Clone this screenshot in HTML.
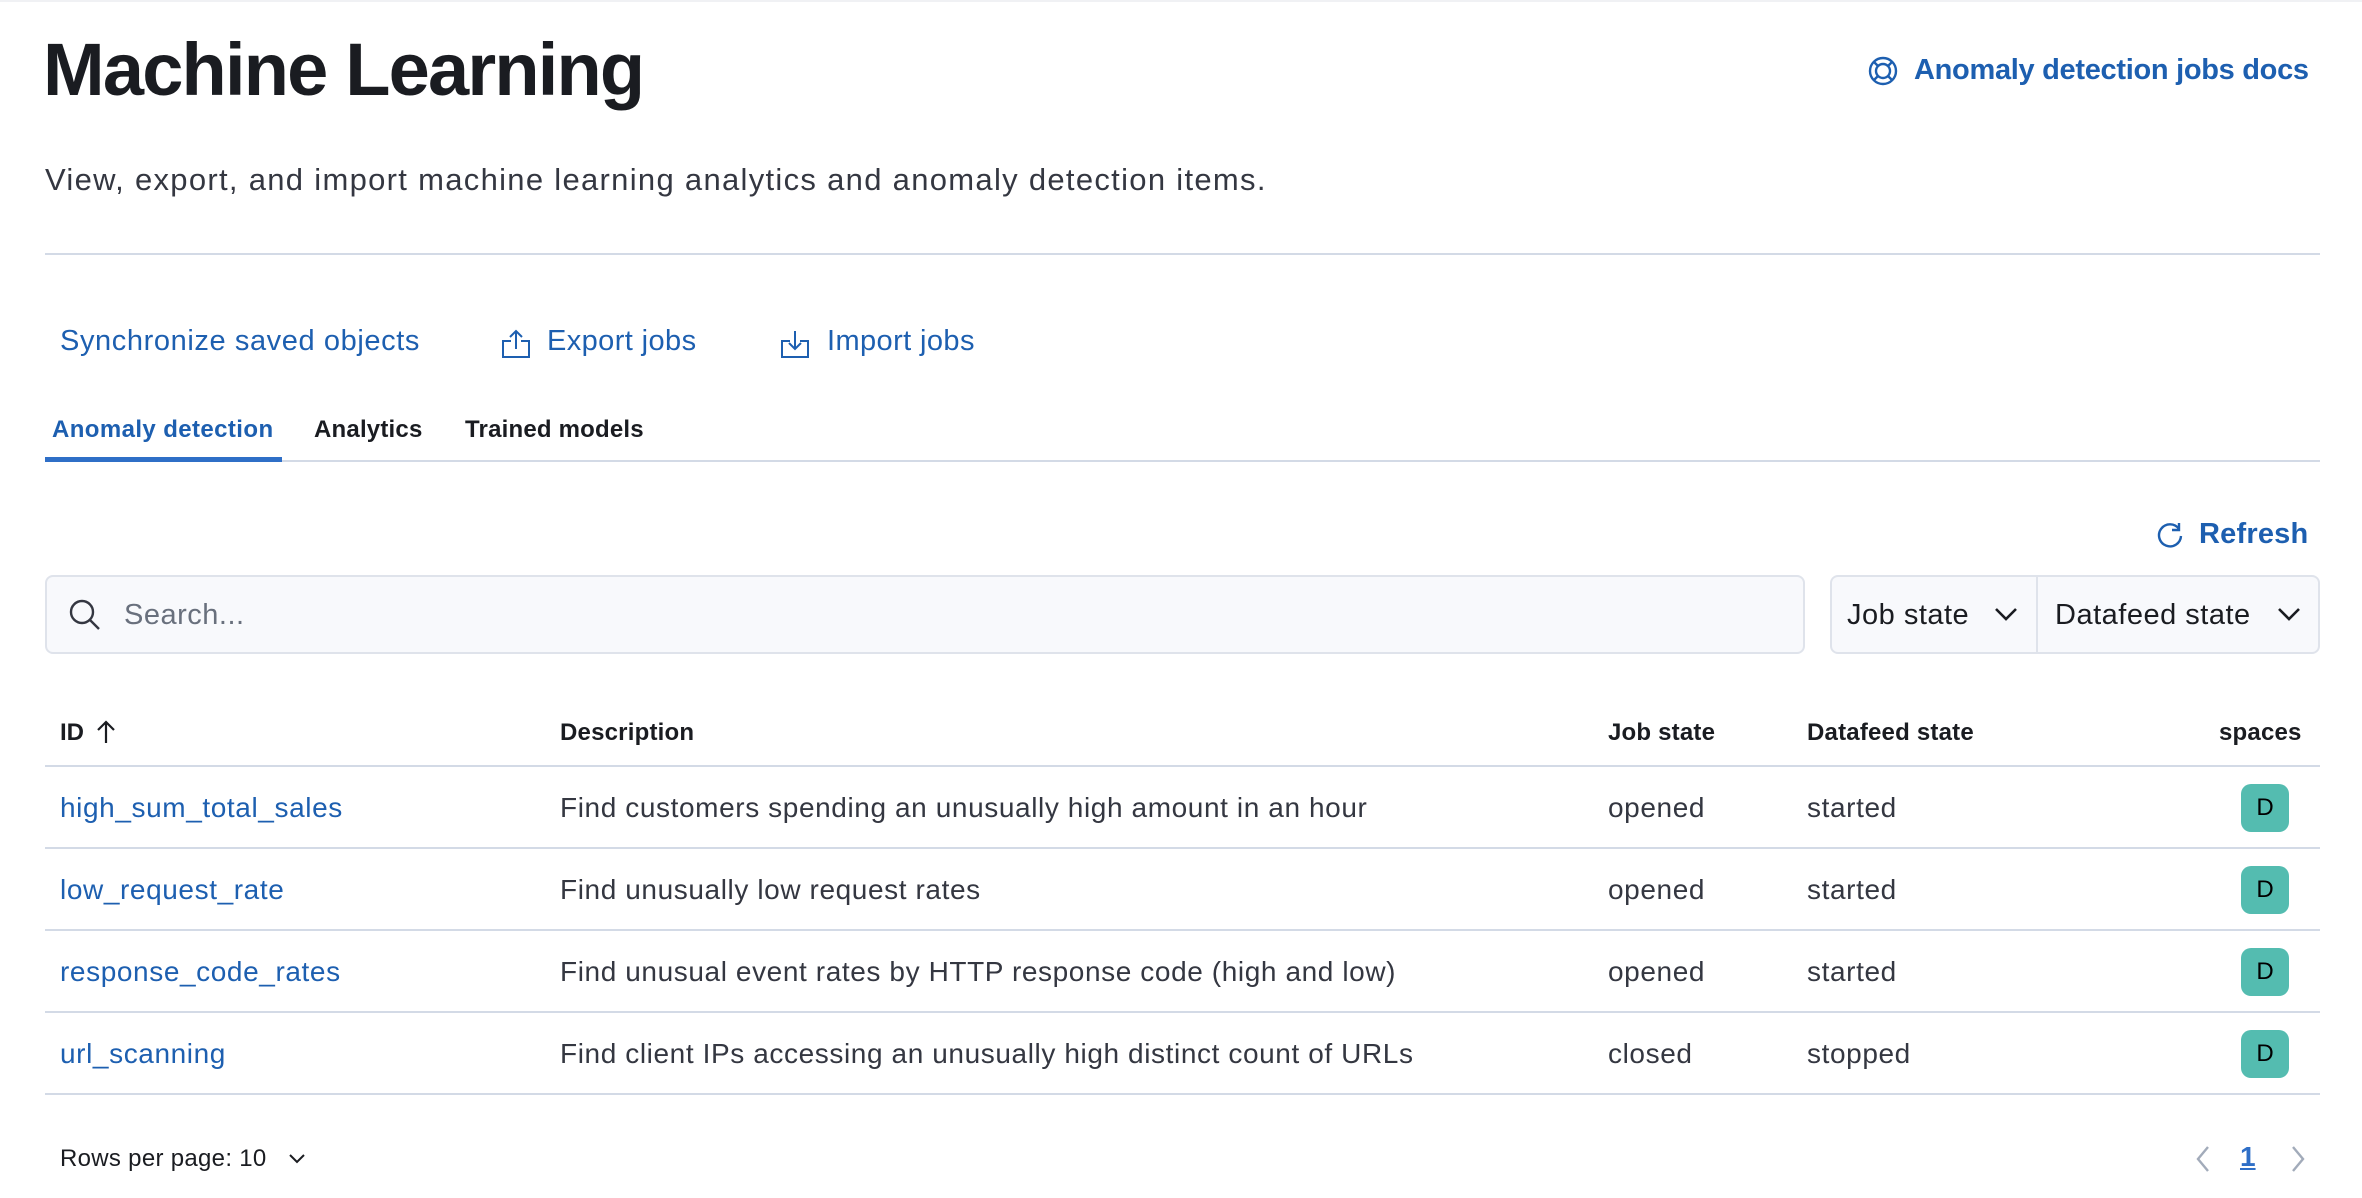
<!DOCTYPE html>
<html><head><meta charset="utf-8"><style>
*{margin:0;padding:0;box-sizing:border-box}
body{width:2362px;height:1198px;background:#fff;font-family:"Liberation Sans",Arial,sans-serif;color:#343741;position:relative;overflow:hidden}
.a{position:absolute;white-space:nowrap}
.blue{color:#1d5fb0}
.line{position:absolute;height:2px;background:#d3dae6;left:45px;width:2275px}
.row{position:absolute;left:0;width:2362px;height:82px;font-size:28px;line-height:82px;letter-spacing:0.6px}
.row span{position:absolute}
.badge{position:absolute;left:2241px;top:17px;width:48px;height:48px;border-radius:10px;background:#54bcb0;color:#000;font-size:24px;line-height:48px;text-align:center;letter-spacing:0}
</style></head><body>
<div style="position:absolute;left:0;top:0;width:2362px;height:2px;background:#f0f1f4"></div>
<div class="a" style="left:43px;top:27px;font-size:74px;font-weight:bold;color:#1a1c21;letter-spacing:-1.8px">Machine Learning</div>
<svg class="a" style="left:1867px;top:55px" width="32" height="32" viewBox="0 0 32 32" fill="none" stroke="#1d5fb0" stroke-width="2.4"><circle cx="16" cy="16" r="13"/><circle cx="16" cy="16" r="7"/><path d="M7 7l4 4M25 7l-4 4M7 25l4-4M25 25l-4-4"/></svg>
<div class="a blue" style="left:1914px;top:54px;font-size:29px;font-weight:bold;letter-spacing:-0.3px">Anomaly detection jobs docs</div>
<div class="a" style="left:45px;top:162px;font-size:31px;color:#343741;letter-spacing:1.3px">View, export, and import machine learning analytics and anomaly detection items.</div>
<div class="line" style="top:253px"></div>
<div class="a blue" style="left:60px;top:325px;font-size:29px;letter-spacing:0.6px">Synchronize saved objects</div>
<svg class="a" style="left:500px;top:328px" width="32" height="32" viewBox="0 0 32 32" fill="none" stroke="#1d5fb0" stroke-width="2"><path d="M11 13H3v16h26V13h-8M16 3v18M10 9l6-6 6 6"/></svg>
<div class="a blue" style="left:547px;top:325px;font-size:29px;letter-spacing:0.4px">Export jobs</div>
<svg class="a" style="left:779px;top:328px" width="32" height="32" viewBox="0 0 32 32" fill="none" stroke="#1d5fb0" stroke-width="2"><path d="M11 13H3v16h26V13h-8M16 3v18M10 15l6 6 6-6"/></svg>
<div class="a blue" style="left:827px;top:325px;font-size:29px;letter-spacing:0.4px">Import jobs</div>
<div class="a blue" style="left:52px;top:416px;font-size:24px;font-weight:bold;letter-spacing:0.4px">Anomaly detection</div>
<div class="a" style="left:314px;top:416px;font-size:24px;font-weight:bold;color:#1a1c21;letter-spacing:0.2px">Analytics</div>
<div class="a" style="left:465px;top:416px;font-size:24px;font-weight:bold;color:#1a1c21;letter-spacing:0.2px">Trained models</div>
<div class="line" style="top:460px"></div>
<div class="a" style="left:45px;top:457px;width:237px;height:5px;background:#2f6fc7"></div>
<svg class="a" style="left:2155px;top:520px" width="30" height="30" viewBox="0 0 30 30" fill="none" stroke="#1d5fb0" stroke-width="2.4"><path d="M24 9A11 11 0 1 0 26 16M24 3v7h-7"/></svg>
<div class="a blue" style="left:2199px;top:518px;font-size:29px;font-weight:bold;letter-spacing:0.2px">Refresh</div>
<div class="a" style="left:45px;top:575px;width:1760px;height:79px;border:2px solid #dfe3eb;border-radius:8px;background:#f8f9fc"></div>
<svg class="a" style="left:67px;top:597px" width="36" height="36" viewBox="0 0 36 36" fill="none" stroke="#343741" stroke-width="2.4"><circle cx="15" cy="15" r="11"/><path d="M23 23l9 9"/></svg>
<div class="a" style="left:124px;top:599px;font-size:29px;color:#69707d;letter-spacing:0.5px">Search...</div>
<div class="a" style="left:1830px;top:575px;width:490px;height:79px;border:2px solid #dfe3eb;border-radius:8px;background:#f8f9fc"></div>
<div class="a" style="left:2036px;top:577px;width:2px;height:75px;background:#dfe3eb"></div>
<div class="a" style="left:1847px;top:599px;font-size:29px;color:#1a1c21;letter-spacing:0.5px">Job state</div>
<svg class="a" style="left:1994px;top:604px" width="24" height="20" viewBox="0 0 24 20" fill="none" stroke="#1a1c21" stroke-width="2.6"><path d="M2 5l10 10 10-10"/></svg>
<div class="a" style="left:2055px;top:599px;font-size:29px;color:#1a1c21;letter-spacing:0.5px">Datafeed state</div>
<svg class="a" style="left:2277px;top:604px" width="24" height="20" viewBox="0 0 24 20" fill="none" stroke="#1a1c21" stroke-width="2.6"><path d="M2 5l10 10 10-10"/></svg>
<div class="a" style="left:60px;top:719px;font-size:24px;font-weight:bold;color:#1a1c21">ID</div>
<svg class="a" style="left:95px;top:719px" width="22" height="26" viewBox="0 0 22 26" fill="none" stroke="#1a1c21" stroke-width="2.2"><path d="M11 24V3M3 11l8-8 8 8"/></svg>
<div class="a" style="left:560px;top:719px;font-size:24px;font-weight:bold;color:#1a1c21;letter-spacing:0.2px">Description</div>
<div class="a" style="left:1608px;top:719px;font-size:24px;font-weight:bold;color:#1a1c21;letter-spacing:0.2px">Job state</div>
<div class="a" style="left:1807px;top:719px;font-size:24px;font-weight:bold;color:#1a1c21;letter-spacing:0.2px">Datafeed state</div>
<div class="a" style="left:2219px;top:719px;font-size:24px;font-weight:bold;color:#1a1c21;letter-spacing:0.2px">spaces</div>
<div class="line" style="top:765px"></div>
<div class="row" style="top:767px"><span class="blue" style="left:60px">high_sum_total_sales</span><span style="left:560px">Find customers spending an unusually high amount in an hour</span><span style="left:1608px">opened</span><span style="left:1807px">started</span><div class="badge">D</div></div>
<div class="line" style="top:847px"></div>
<div class="row" style="top:849px"><span class="blue" style="left:60px">low_request_rate</span><span style="left:560px">Find unusually low request rates</span><span style="left:1608px">opened</span><span style="left:1807px">started</span><div class="badge">D</div></div>
<div class="line" style="top:929px"></div>
<div class="row" style="top:931px"><span class="blue" style="left:60px">response_code_rates</span><span style="left:560px">Find unusual event rates by HTTP response code (high and low)</span><span style="left:1608px">opened</span><span style="left:1807px">started</span><div class="badge">D</div></div>
<div class="line" style="top:1011px"></div>
<div class="row" style="top:1013px"><span class="blue" style="left:60px">url_scanning</span><span style="left:560px">Find client IPs accessing an unusually high distinct count of URLs</span><span style="left:1608px">closed</span><span style="left:1807px">stopped</span><div class="badge">D</div></div>
<div class="line" style="top:1093px"></div>
<div class="a" style="left:60px;top:1145px;font-size:24px;color:#1a1c21;letter-spacing:0.3px">Rows per page: 10</div>
<svg class="a" style="left:287px;top:1151px" width="20" height="16" viewBox="0 0 20 16" fill="none" stroke="#1a1c21" stroke-width="2"><path d="M3 4l7 7 7-7"/></svg>
<svg class="a" style="left:2194px;top:1144px" width="20" height="30" viewBox="0 0 20 30" fill="none" stroke="#a2abba" stroke-width="2.4"><path d="M14 3L4 15l10 12"/></svg>
<div class="a" style="left:2240px;top:1141px;font-size:28px;font-weight:bold;color:#2f6fc7;text-decoration:underline">1</div>
<svg class="a" style="left:2287px;top:1144px" width="20" height="30" viewBox="0 0 20 30" fill="none" stroke="#a2abba" stroke-width="2.4"><path d="M6 3l10 12L6 27"/></svg>
</body></html>
